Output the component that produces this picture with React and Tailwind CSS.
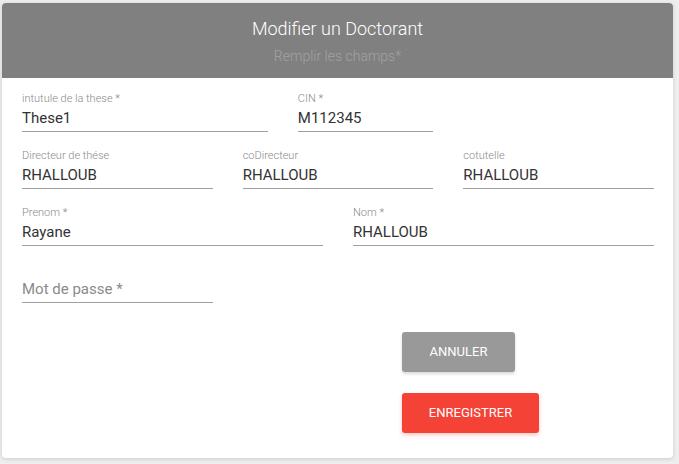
import React from 'react';

const Field = ({ label, value, placeholder, span }) => (
    <div className={span}>
        <div className="h-[14px] text-[11px] font-light leading-[14px] text-[#8a8a8a]">{label}</div>
        <div className="h-[26px] border-b border-[#a0a0a0] flex items-center">
            {value ? (
                <span className="text-[15px] text-[#333] leading-none">{value}</span>
            ) : (
                <span className="text-[15px] text-[#8a8a8a] leading-none">{placeholder}</span>
            )}
        </div>
    </div>
);

const App = () => {
    return (
        <div className="w-[679px] h-[464px] bg-[#eeeeee] pt-[3px] pl-[2px]" style={{ fontFamily: 'Roboto, "Liberation Sans", sans-serif' }}>
            <div className="w-[671px] h-[455px] bg-white rounded-[4px] shadow-[0_1px_4px_rgba(0,0,0,0.15)] overflow-hidden">
                <div className="h-[75px] bg-[#808080] flex flex-col items-center pt-[15px]">
                    <h4 className="text-[18px] font-light text-white leading-[22px]">Modifier un Doctorant</h4>
                    <p className="mt-[6px] text-[14px] font-light text-[#a2a2a2] leading-[20px]">Remplir les champs*</p>
                </div>

                <div className="pl-[20px] pr-[19px] pt-[14px]">
                    <div className="grid grid-cols-12 gap-x-[30px] gap-y-[17px]">
                        <Field span="col-span-5" label="intutule de la these *" value="These1" />
                        <Field span="col-span-3" label="CIN *" value="M112345" />
                        <div className="col-span-4" />

                        <Field span="col-span-4" label="Directeur de thése" value="RHALLOUB" />
                        <Field span="col-span-4" label="coDirecteur" value="RHALLOUB" />
                        <Field span="col-span-4" label="cotutelle" value="RHALLOUB" />

                        <Field span="col-span-6" label="Prenom *" value="Rayane" />
                        <Field span="col-span-6" label="Nom *" value="RHALLOUB" />

                        <Field span="col-span-4" label="" placeholder="Mot de passe *" />
                    </div>

                    <div className="ml-[380px] mt-[29px] flex flex-col items-start gap-[21px]">
                        <button className="w-[113px] h-[40px] rounded-[3px] bg-[#999999] text-white text-[13px] font-normal shadow-[0_2px_3px_rgba(0,0,0,0.15)]">
                            ANNULER
                        </button>
                        <button className="w-[137px] h-[40px] rounded-[3px] bg-[#f44336] text-white text-[13px] font-normal shadow-[0_2px_4px_rgba(244,67,54,0.3)]">
                            ENREGISTRER
                        </button>
                    </div>
                </div>
            </div>
        </div>
    );
};

export default App;
